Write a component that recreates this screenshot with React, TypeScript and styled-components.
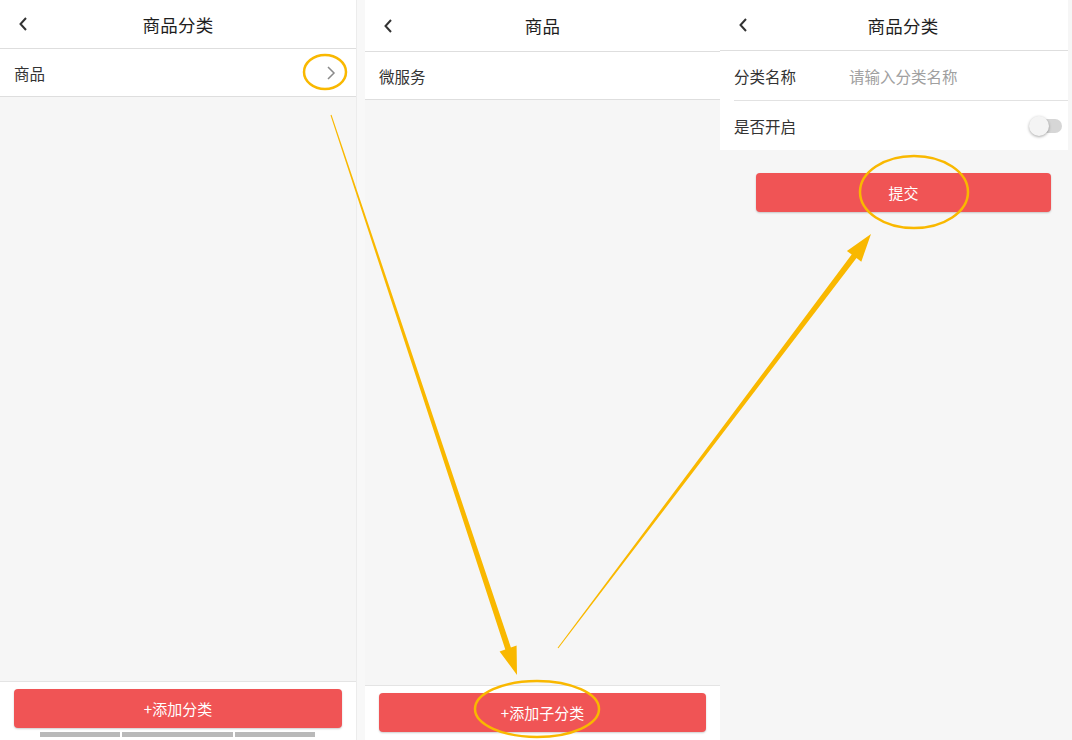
import styled, { createGlobalStyle } from "styled-components";

const GlobalStyle = createGlobalStyle`
  html, body {
    margin: 0;
    padding: 0;
    background: #ffffff;
  }
  body {
    font-family: "Noto Sans CJK SC", "Noto Sans", sans-serif;
    color: #333;
  }
`;

const Page = styled.div`
  position: relative;
  width: 1072px;
  height: 740px;
  display: flex;
  overflow: hidden;
  background: #fff;
`;

const Screen = styled.div<{ $width: number }>`
  width: ${p => p.$width}px;
  flex: none;
  display: flex;
  flex-direction: column;
  background: #f6f6f6;
`;

const Divider = styled.div<{ $width: number }>`
  width: ${p => p.$width}px;
  flex: none;
  border-left: 1px solid #ececec;
  box-sizing: border-box;
  background: #f8f8f8;
`;

const Header = styled.div<{ $height: number; $shift?: number; $trim?: number }>`
  height: ${p => p.$height}px;
  flex: none;
  position: relative;
  display: flex;
  align-items: center;
  justify-content: center;
  padding-left: ${p => p.$shift ?? 0}px;
  margin-right: ${p => p.$trim ?? 0}px;
  background: #fff;
  border-bottom: 1px solid #dedede;
`;

const BackButton = styled.span`
  position: absolute;
  left: 18px;
  top: 50%;
  transform: translateY(-50%);
  display: flex;
`;

const Title = styled.div`
  font-size: 17.5px;
  color: #1e1e1e;
  letter-spacing: 0.3px;
`;

const ListRow = styled.div`
  height: 47px;
  flex: none;
  display: flex;
  align-items: center;
  justify-content: space-between;
  padding: 0 20px 0 14px;
  background: #fff;
  border-bottom: 1px solid #dedede;
  font-size: 15.5px;
  color: #333;
`;

const Body = styled.div`
  flex: 1;
`;

const Footer = styled.div<{ $top: number; $pad: number }>`
  flex: none;
  background: #fff;
  border-top: 1px solid #e4e4e4;
  padding: ${p => p.$top}px 14px ${p => p.$pad}px;
  display: flex;
  flex-direction: column;
  align-items: stretch;
`;

const PrimaryButton = styled.button<{ $width?: string }>`
  height: 39px;
  width: ${p => p.$width ?? "100%"};
  border: none;
  border-radius: 4px;
  background: #f05455;
  color: #fff;
  font-family: inherit;
  font-size: 15px;
  box-shadow: 0 1px 2px rgba(0, 0, 0, 0.2);
  padding: 0;
`;

const TabStubs = styled.div`
  display: flex;
  gap: 2px;
  padding: 4px 0 0 26px;
`;

const TabStub = styled.span<{ $w: number }>`
  width: ${p => p.$w}px;
  height: 5px;
  background: #b9b9b9;
`;

const FormCard = styled.div`
  background: #fff;
  margin-right: 4px;
  flex: none;
`;

const FormRow = styled.div<{ $line?: boolean }>`
  height: 49px;
  margin-left: 14px;
  display: flex;
  align-items: center;
  border-bottom: ${p => (p.$line ? "1px solid #e2e2e2" : "none")};
  font-size: 15.5px;
  color: #333;
`;

const FieldLabel = styled.span`
  width: 115px;
`;

const Placeholder = styled.span`
  color: #a0a0a0;
`;

const Switch = styled.span`
  margin-left: auto;
  margin-right: 6px;
  position: relative;
  width: 32px;
  height: 14px;
  border-radius: 7px;
  background: #d6d6d6;
`;

const Knob = styled.span`
  position: absolute;
  left: -1px;
  top: -3px;
  width: 20px;
  height: 20px;
  border-radius: 50%;
  background: #f4f4f4;
  box-shadow: 0 1px 3px rgba(0, 0, 0, 0.35);
`;

const SubmitWrap = styled.div`
  padding: 23px 21px 0 36px;
  display: flex;
`;

const Overlay = styled.svg`
  position: absolute;
  left: 0;
  top: 0;
  pointer-events: none;
`;

const Back = () => (
  <BackButton>
    <svg width="10" height="16" viewBox="0 0 10 16">
      <path d="M8 2 L2.5 8 L8 14" fill="none" stroke="#333" strokeWidth="2" />
    </svg>
  </BackButton>
);

const Chevron = () => (
  <svg width="10" height="16" viewBox="0 0 10 16">
    <path d="M2 2 L8 8 L2 14" fill="none" stroke="#8a8a8a" strokeWidth="1.5" />
  </svg>
);

const YELLOW = "#f9b800";

export default function App() {
  return (
    <>
      <GlobalStyle />
      <Page>
        <Screen $width={356}>
          <Header $height={48}>
            <Back />
            <Title>商品分类</Title>
          </Header>
          <ListRow>
            <span>商品</span>
            <Chevron />
          </ListRow>
          <Body />
          <Footer $top={7} $pad={3}>
            <PrimaryButton>+添加分类</PrimaryButton>
            <TabStubs>
              <TabStub $w={80} />
              <TabStub $w={111} />
              <TabStub $w={80} />
            </TabStubs>
          </Footer>
        </Screen>

        <Divider $width={9} />

        <Screen $width={355}>
          <Header $height={51}>
            <Back />
            <Title>商品</Title>
          </Header>
          <ListRow>
            <span>微服务</span>
          </ListRow>
          <Body />
          <Footer $top={7} $pad={8}>
            <PrimaryButton>+添加子分类</PrimaryButton>
          </Footer>
        </Screen>

        <Screen $width={352}>
          <Header $height={50} $shift={18} $trim={4}>
            <Back />
            <Title>商品分类</Title>
          </Header>
          <FormCard>
            <FormRow $line>
              <FieldLabel>分类名称</FieldLabel>
              <Placeholder>请输入分类名称</Placeholder>
            </FormRow>
            <FormRow>
              <FieldLabel>是否开启</FieldLabel>
              <Switch>
                <Knob />
              </Switch>
            </FormRow>
          </FormCard>
          <SubmitWrap>
            <PrimaryButton $width="295px">提交</PrimaryButton>
          </SubmitWrap>
          <Body />
        </Screen>

        <Overlay width={1072} height={740} viewBox="0 0 1072 740">
          <ellipse cx="325" cy="72" rx="21" ry="17" fill="none" stroke={YELLOW} strokeWidth="2.5" />
          <ellipse cx="537" cy="709" rx="62" ry="28" fill="none" stroke={YELLOW} strokeWidth="2.5" />
          <ellipse cx="914" cy="192" rx="54" ry="36" fill="none" stroke={YELLOW} strokeWidth="2.5" />
          <polygon
            fill={YELLOW}
            points="330.5,115.2 505.3,649.5 499.6,651.4 517,675 516.6,645.6 510.9,647.5 331.5,114.8"
          />
          <polygon
            fill={YELLOW}
            points="558.4,648.3 856.5,258.1 861.3,261.7 871,234 846.9,250.9 851.7,254.5 557.6,647.7"
          />
        </Overlay>
      </Page>
    </>
  );
}
